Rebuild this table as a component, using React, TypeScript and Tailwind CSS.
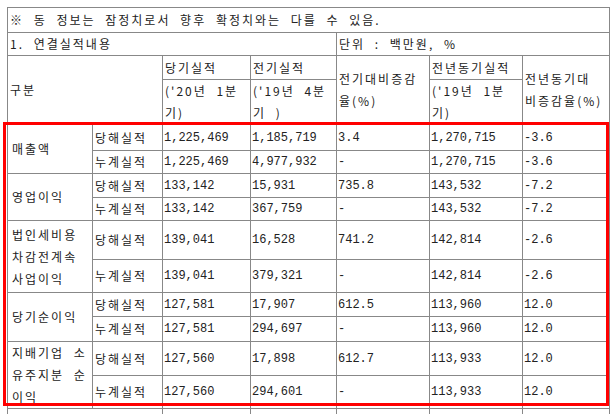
import React from 'react';

type ROW = {
    label?: string[];
    kind: string;
    values: string[];
    h: number;
};

const ROWS: ROW[] = [
    { label: ['매출액'], kind: '당해실적', values: ['1,225,469', '1,185,719', '3.4', '1,270,715', '-3.6'], h: 26 },
    { kind: '누계실적', values: ['1,225,469', '4,977,932', '-', '1,270,715', '-3.6'], h: 22 },
    { label: ['영업이익'], kind: '당해실적', values: ['133,142', '15,931', '735.8', '143,532', '-7.2'], h: 24 },
    { kind: '누계실적', values: ['133,142', '367,759', '-', '143,532', '-7.2'], h: 22 },
    { label: ['법인세비용', '차감전계속', '사업이익'], kind: '당해실적', values: ['139,041', '16,528', '741.2', '142,814', '-2.6'], h: 39 },
    { kind: '누계실적', values: ['139,041', '379,321', '-', '142,814', '-2.6'], h: 33 },
    { label: ['당기순이익'], kind: '당해실적', values: ['127,581', '17,907', '612.5', '113,960', '12.0'], h: 24 },
    { kind: '누계실적', values: ['127,581', '294,697', '-', '113,960', '12.0'], h: 25 },
    { label: ['지배기업 소', '유주지분 순', '이익'], kind: '당해실적', values: ['127,560', '17,898', '612.7', '113,933', '12.0'], h: 34 },
    { kind: '누계실적', values: ['127,560', '294,601', '-', '113,933', '12.0'], h: 33 },
];

const CELL = "border border-[#888] pl-[2px] py-0 align-middle text-left font-normal text-[12px] leading-[22px] tracking-[2px] [word-spacing:5px] font-['Noto_Sans_CJK_KR',sans-serif]";
const NUM = "border border-[#888] pl-[1px] py-0 align-middle text-[12px] leading-[22px] tracking-normal font-['Liberation_Mono','Noto_Sans_CJK_KR',monospace]";

const App: React.FC = () => {
    return (
        <div className="relative h-[414px] w-[616px] overflow-hidden bg-white pl-[7px] pt-[7px] text-[#222]">
            <table className="w-[602px] table-fixed border-collapse">
                <colgroup>
                    <col className="w-[85px]" />
                    <col className="w-[70px]" />
                    <col className="w-[88px]" />
                    <col className="w-[86px]" />
                    <col className="w-[93px]" />
                    <col className="w-[93px]" />
                    <col className="w-[87px]" />
                </colgroup>
                <tbody>
                    <tr className="h-[25px]">
                        <td colSpan={7} className={CELL}>※ 동 정보는 잠정치로서 향후 확정치와는 다를 수 있음.</td>
                    </tr>
                    <tr className="h-[23px]">
                        <td colSpan={4} className={CELL}>1. 연결실적내용</td>
                        <td colSpan={3} className={CELL}>단위 : 백만원, %</td>
                    </tr>
                    <tr className="h-[24px]">
                        <td colSpan={2} rowSpan={2} className={CELL}>구분</td>
                        <td className={CELL}>당기실적</td>
                        <td className={CELL}>전기실적</td>
                        <td rowSpan={2} className={CELL}>전기대비증감<br />율(%)</td>
                        <td className={CELL}>전년동기실적</td>
                        <td rowSpan={2} className={CELL}>전년동기대<br />비증감율(%)</td>
                    </tr>
                    <tr className="h-[44px]">
                        <td className={CELL}>('20년 1분<br />기)</td>
                        <td className={CELL}>('19년 4분<br />기 )</td>
                        <td className={CELL}>('19년 1분<br />기)</td>
                    </tr>
                    {ROWS.map((row, i) => (
                        <tr key={i} style={{ height: row.h }}>
                            {row.label && (
                                <td rowSpan={2} className={CELL + ' pl-[4px]'}>
                                    {row.label.map((l, j) => (
                                        <div key={j}>{l}</div>
                                    ))}
                                </td>
                            )}
                            <td className={CELL}>{row.kind}</td>
                            {row.values.map((v, j) => (
                                <td key={j} className={NUM}>{v}</td>
                            ))}
                        </tr>
                    ))}
                    <tr className="h-[24px]">
                        <td colSpan={2} className={CELL}></td>
                        <td className={CELL}></td>
                        <td className={CELL}></td>
                        <td className={CELL}></td>
                        <td className={CELL}></td>
                        <td className={CELL}></td>
                    </tr>
                </tbody>
            </table>
            <div className="absolute left-[3px] top-[122px] h-[284px] w-[606px] border-[3px] border-[#ff0000]"></div>
        </div>
    );
};

export default App;
